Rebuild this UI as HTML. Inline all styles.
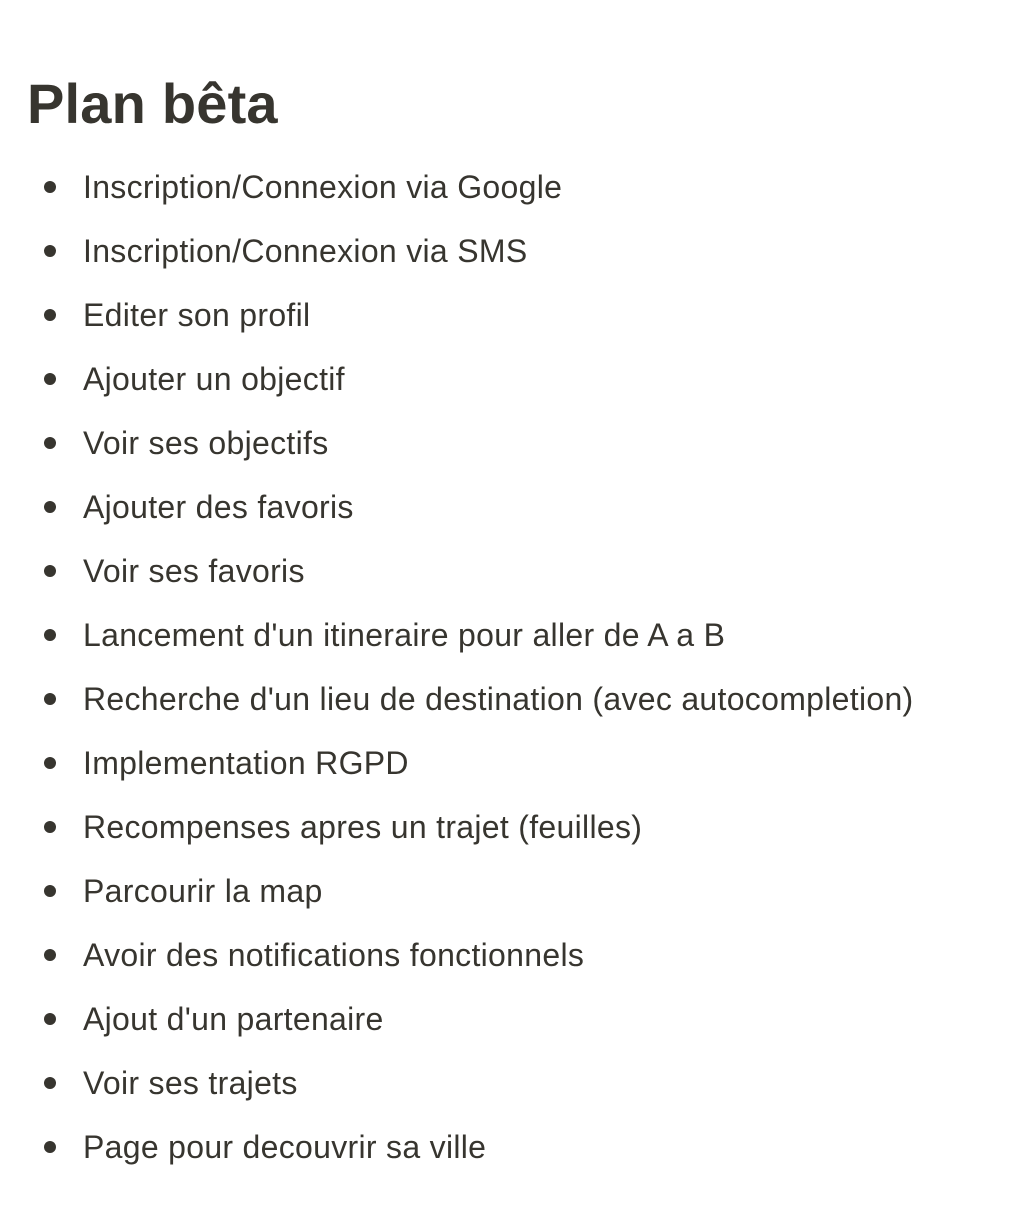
<!DOCTYPE html>
<html><head><meta charset="utf-8"><style>
html,body{margin:0;padding:0;background:#fff;width:1034px;height:1222px;overflow:hidden}
body{font-family:"Liberation Sans",sans-serif;color:#37352f;position:relative}
h1{position:absolute;left:27px;top:66px;margin:0;font-size:56px;font-weight:bold;line-height:76px;color:#37352f;letter-spacing:0.2px}
.it{position:absolute;left:83px;font-size:32px;line-height:40px;white-space:nowrap;letter-spacing:0.3px}
.it::before{content:"";position:absolute;left:-39px;top:14px;width:12px;height:12px;border-radius:50%;background:#37352f}
</style></head><body>
<h1>Plan bêta</h1>
<div class="it" style="top:167px">Inscription/Connexion via Google</div>
<div class="it" style="top:231px">Inscription/Connexion via SMS</div>
<div class="it" style="top:295px">Editer son profil</div>
<div class="it" style="top:359px">Ajouter un objectif</div>
<div class="it" style="top:423px">Voir ses objectifs</div>
<div class="it" style="top:487px">Ajouter des favoris</div>
<div class="it" style="top:551px">Voir ses favoris</div>
<div class="it" style="top:615px">Lancement d'un itineraire pour aller de A a B</div>
<div class="it" style="top:679px">Recherche d'un lieu de destination (avec autocompletion)</div>
<div class="it" style="top:743px">Implementation RGPD</div>
<div class="it" style="top:807px">Recompenses apres un trajet (feuilles)</div>
<div class="it" style="top:871px">Parcourir la map</div>
<div class="it" style="top:935px">Avoir des notifications fonctionnels</div>
<div class="it" style="top:999px">Ajout d'un partenaire</div>
<div class="it" style="top:1063px">Voir ses trajets</div>
<div class="it" style="top:1127px">Page pour decouvrir sa ville</div>
</body></html>
